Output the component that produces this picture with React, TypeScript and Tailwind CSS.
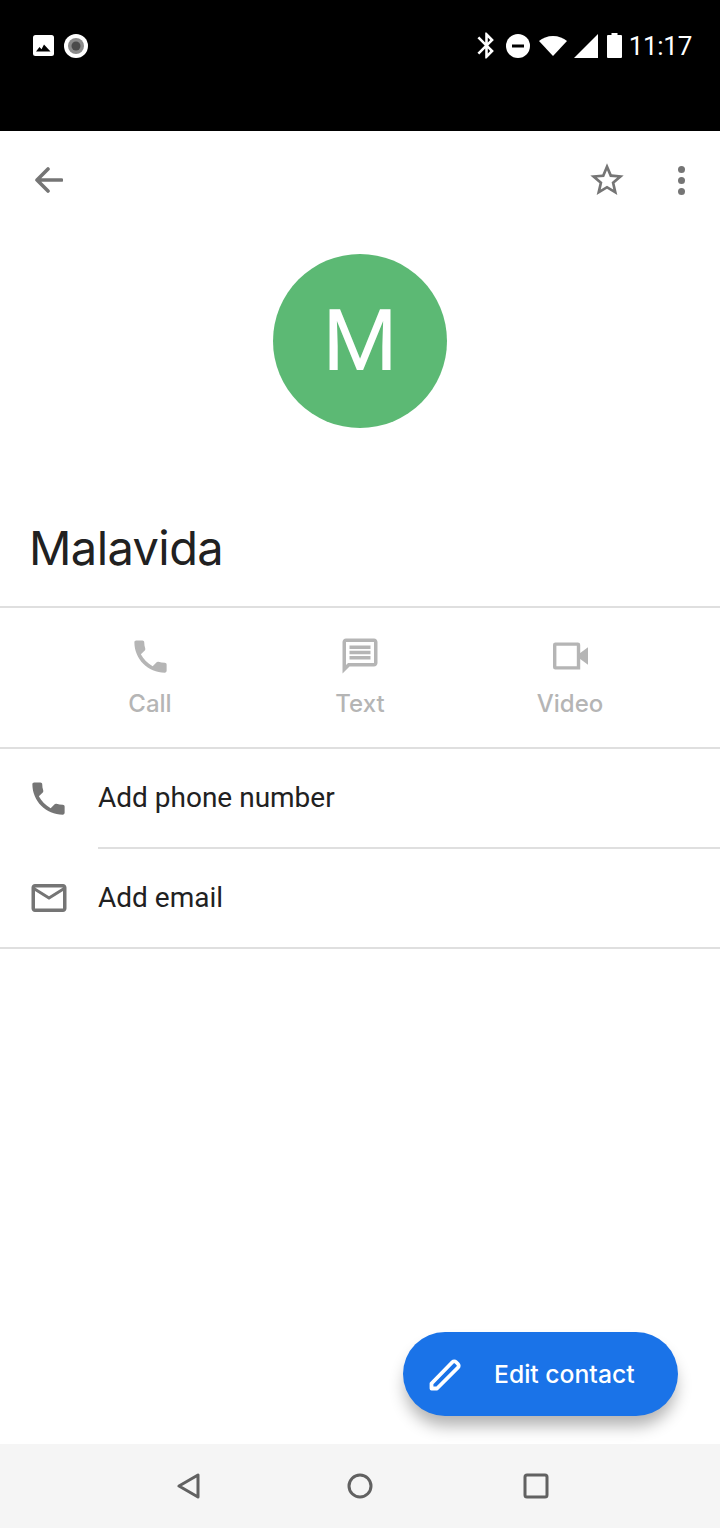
const PHONE =
  "M6.62 10.79c1.44 2.83 3.76 5.14 6.59 6.59l2.2-2.2c.27-.27.67-.36 1.02-.24 1.12.37 2.33.57 3.57.57.55 0 1 .45 1 1V20c0 .55-.45 1-1 1-9.39 0-17-7.61-17-17 0-.55.45-1 1-1h3.5c.55 0 1 .45 1 1 0 1.25.2 2.45.57 3.57.11.35.03.74-.25 1.02l-2.2 2.2z";

function Icon({ d, className }: { d: string; className: string }) {
  return (
    <svg viewBox="0 0 24 24" className={className} fill="currentColor">
      <path d={d} fillRule="evenodd" />
    </svg>
  );
}

function StatusBar() {
  return (
    <div className="h-[131px] bg-black shrink-0">
      <div className="h-[91px] flex items-center justify-between pl-[33px] pr-[28px] text-white">
        <div className="flex items-center gap-[10px]">
          <svg viewBox="0 0 21 21" className="w-[21px] h-[21px]">
            <rect width="21" height="21" rx="2.5" fill="#fff" />
            <path d="M3 16.5l3.5-4.5 2 2.2L11 9.5l6.5 7z" fill="#000" />
          </svg>
          <svg viewBox="0 0 24 24" className="w-[24px] h-[24px]">
            <circle cx="12" cy="12" r="12" fill="#fff" />
            <circle cx="12" cy="12" r="8" fill="#8a8a8a" />
            <circle cx="12" cy="12" r="4.5" fill="#4a4a4a" />
          </svg>
        </div>
        <div className="flex items-center">
          <Icon
            className="w-[31px] h-[31px]"
            d="M17.71 7.71L12 2h-1v7.59L6.41 5 5 6.41 10.59 12 5 17.59 6.41 19 11 14.41V22h1l5.71-5.71-4.3-4.29 4.3-4.29zM13 5.83l1.88 1.88L13 9.59V5.83zm1.88 10.46L13 18.17v-3.76l1.88 1.88z"
          />
          <svg viewBox="0 0 24 24" className="w-[24px] h-[24px] ml-[4px]">
            <circle cx="12" cy="12" r="12" fill="#fff" />
            <rect x="6" y="10.5" width="12" height="3" fill="#000" />
          </svg>
          <svg viewBox="0 0 28 20" className="w-[28px] h-[20px] ml-[9px]">
            <path d="M14 20L0 5C3.5 2 8.500 0 14 0s10.500 2 14 5z" fill="#fff" />
          </svg>
          <svg viewBox="0 0 24 24" className="w-[24px] h-[24px] ml-[7px]">
            <path d="M24 0v24H0z" fill="#fff" />
          </svg>
          <svg viewBox="0 0 15 25" className="w-[15px] h-[25px] ml-[9px]">
            <path d="M4.500 0h6v2H14a1 1 0 0 1 1 1v21a1 1 0 0 1-1 1H1a1 1 0 0 1-1-1V3a1 1 0 0 1 1-1h3.500z" fill="#fff" />
          </svg>
          <span className="ml-[7px] text-[26px] leading-none font-['Roboto',sans-serif] tracking-[-0.3px]">11:17</span>
        </div>
      </div>
    </div>
  );
}

function TopBar() {
  return (
    <div className="h-[98px] flex items-center justify-between text-[#757575] shrink-0 pl-[35px] pr-[35px]">
      <svg viewBox="0 0 28 26" className="w-[28px] h-[26px]" fill="none" stroke="currentColor" strokeWidth="3.6" strokeLinecap="round" strokeLinejoin="round">
        <path d="M26.500 13H2M13 2L2 13l11 11" />
      </svg>
      <div className="flex items-center gap-[51px]">
        <Icon
          className="w-[40px] h-[40px]"
          d="M22 9.24l-7.19-.62L12 2 9.19 8.63 2 9.24l5.46 4.73L5.82 21 12 17.27 18.18 21l-1.63-7.03L22 9.24zM12 15.4l-3.76 2.27 1-4.28-3.32-2.88 4.38-.38L12 6.1l1.71 4.04 4.38.38-3.32 2.88 1 4.28L12 15.4z"
        />
        <div className="flex flex-col gap-[4px]">
          <div className="w-[7px] h-[7px] rounded-full bg-[#757575]" />
          <div className="w-[7px] h-[7px] rounded-full bg-[#757575]" />
          <div className="w-[7px] h-[7px] rounded-full bg-[#757575]" />
        </div>
      </div>
    </div>
  );
}

function ActionItem({ label, icon }: { label: string; icon: React.ReactNode }) {
  return (
    <div className="flex flex-col items-center w-[140px]">
      <div className="h-[44px] flex items-center justify-center text-[#b5b5b5]">{icon}</div>
      <span className="mt-[10px] text-[24px] font-medium leading-[32px] text-[#b5b5b5] font-['Inter',sans-serif]">{label}</span>
    </div>
  );
}

export default function App() {
  return (
    <div className="relative w-[720px] h-[1528px] bg-white flex flex-col overflow-hidden font-['Roboto',sans-serif]">
      <StatusBar />
      <TopBar />

      {/* avatar */}
      <div className="flex justify-center mt-[25px] shrink-0">
        <div className="w-[174px] h-[174px] rounded-full bg-[#5cb974] flex items-center justify-center text-white text-[86px] leading-none">
          M
        </div>
      </div>

      {/* name */}
      <div className="h-[178px] pl-[29px] pt-[86px] text-[47px] leading-[68px] tracking-[-0.6px] text-[#212121] shrink-0 font-['Inter',sans-serif]">
        Malavida
      </div>

      <div className="h-[2px] bg-[#dfdfdf] shrink-0" />
      <div className="h-[139px] flex justify-between items-start pt-[26px] px-[80px] shrink-0">
        <ActionItem label="Call" icon={<Icon className="w-[43px] h-[43px]" d={PHONE} />} />
        <ActionItem
          label="Text"
          icon={
            <Icon
              className="w-[42px] h-[42px]"
              d="M20 2H4c-1.100 0-2 .9-2 2v18l4-4h14c1.100 0 2-.9 2-2V4c0-1.100-.9-2-2-2zm0 14H5.170L4 17.170V4h16v12zM6 12h12v2H6zm0-3h12v2H6zm0-3h12v2H6z"
            />
          }
        />
        <ActionItem
          label="Video"
          icon={
            <svg viewBox="0 0 36 28" className="w-[35px] h-[28px]" fill="currentColor">
              <path
                fillRule="evenodd"
                d="M2.500 0h23A2.500 2.500 0 0 1 28 2.500V28H2.500A2.500 2.500 0 0 1 0 25.500v-23A2.500 2.500 0 0 1 2.500 0zM3.500 3.500v21h21v-21zM28 11l8-6v18l-8-6z"
              />
            </svg>
          }
        />
      </div>
      <div className="h-[2px] bg-[#dfdfdf] shrink-0" />

      {/* rows */}
      <div className="h-[98px] flex items-center pl-[27px] text-[28px] text-[#212121] shrink-0">
        <Icon className="w-[43px] h-[43px] text-[#757575] mr-[28px]" d={PHONE} />
        Add phone number
      </div>
      <div className="h-[2px] bg-[#dfdfdf] ml-[98px] shrink-0" />
      <div className="h-[98px] flex items-center pl-[28px] text-[28px] text-[#212121] shrink-0">
        <Icon
          className="w-[42px] h-[42px] text-[#757575] mr-[28px]"
          d="M22 6c0-1.100-.9-2-2-2H4c-1.100 0-2 .9-2 2v12c0 1.100.9 2 2 2h16c1.100 0 2-.9 2-2V6zm-2 0l-8 5-8-5h16zm0 12H4V8l8 5 8-5v10z"
        />
        Add email
      </div>
      <div className="h-[2px] bg-[#dfdfdf] shrink-0" />

      {/* fab */}
      <div className="absolute left-[403px] top-[1332px] w-[275px] h-[84px] rounded-full bg-[#1a73e8] flex items-center text-white shadow-[0_12px_16px_-2px_rgba(0,0,0,0.3)]">
        <svg viewBox="0 0 33 33" className="w-[33px] h-[33px] ml-[26px]" fill="none" stroke="#fff" strokeWidth="3.800" strokeLinejoin="round">
          <path d="M2.500 30.500v-5L23.500 4a2.500 2.500 0 0 1 3.500 0l2 2a2.500 2.500 0 0 1 0 3.500L8 30.500z" />
        </svg>
        <span className="ml-[32px] text-[24.7px] font-medium leading-none font-['Inter',sans-serif]">Edit contact</span>
      </div>

      {/* nav bar */}
      <div className="mt-auto h-[84px] bg-[#f5f5f5] flex items-center shrink-0 pl-[177px] text-[#616161]">
        <svg viewBox="0 0 24 26" className="w-[24px] h-[26px]" fill="none" stroke="currentColor" strokeWidth="3" strokeLinejoin="round">
          <path d="M21 2v22L2 13z" />
        </svg>
        <svg viewBox="0 0 26 26" className="w-[26px] h-[26px] ml-[146px]" fill="none" stroke="currentColor" strokeWidth="3">
          <circle cx="13" cy="13" r="11" />
        </svg>
        <svg viewBox="0 0 26 26" className="w-[26px] h-[26px] ml-[150px]" fill="none" stroke="currentColor" strokeWidth="3">
          <rect x="2" y="2" width="22" height="22" rx="2" />
        </svg>
      </div>
    </div>
  );
}
